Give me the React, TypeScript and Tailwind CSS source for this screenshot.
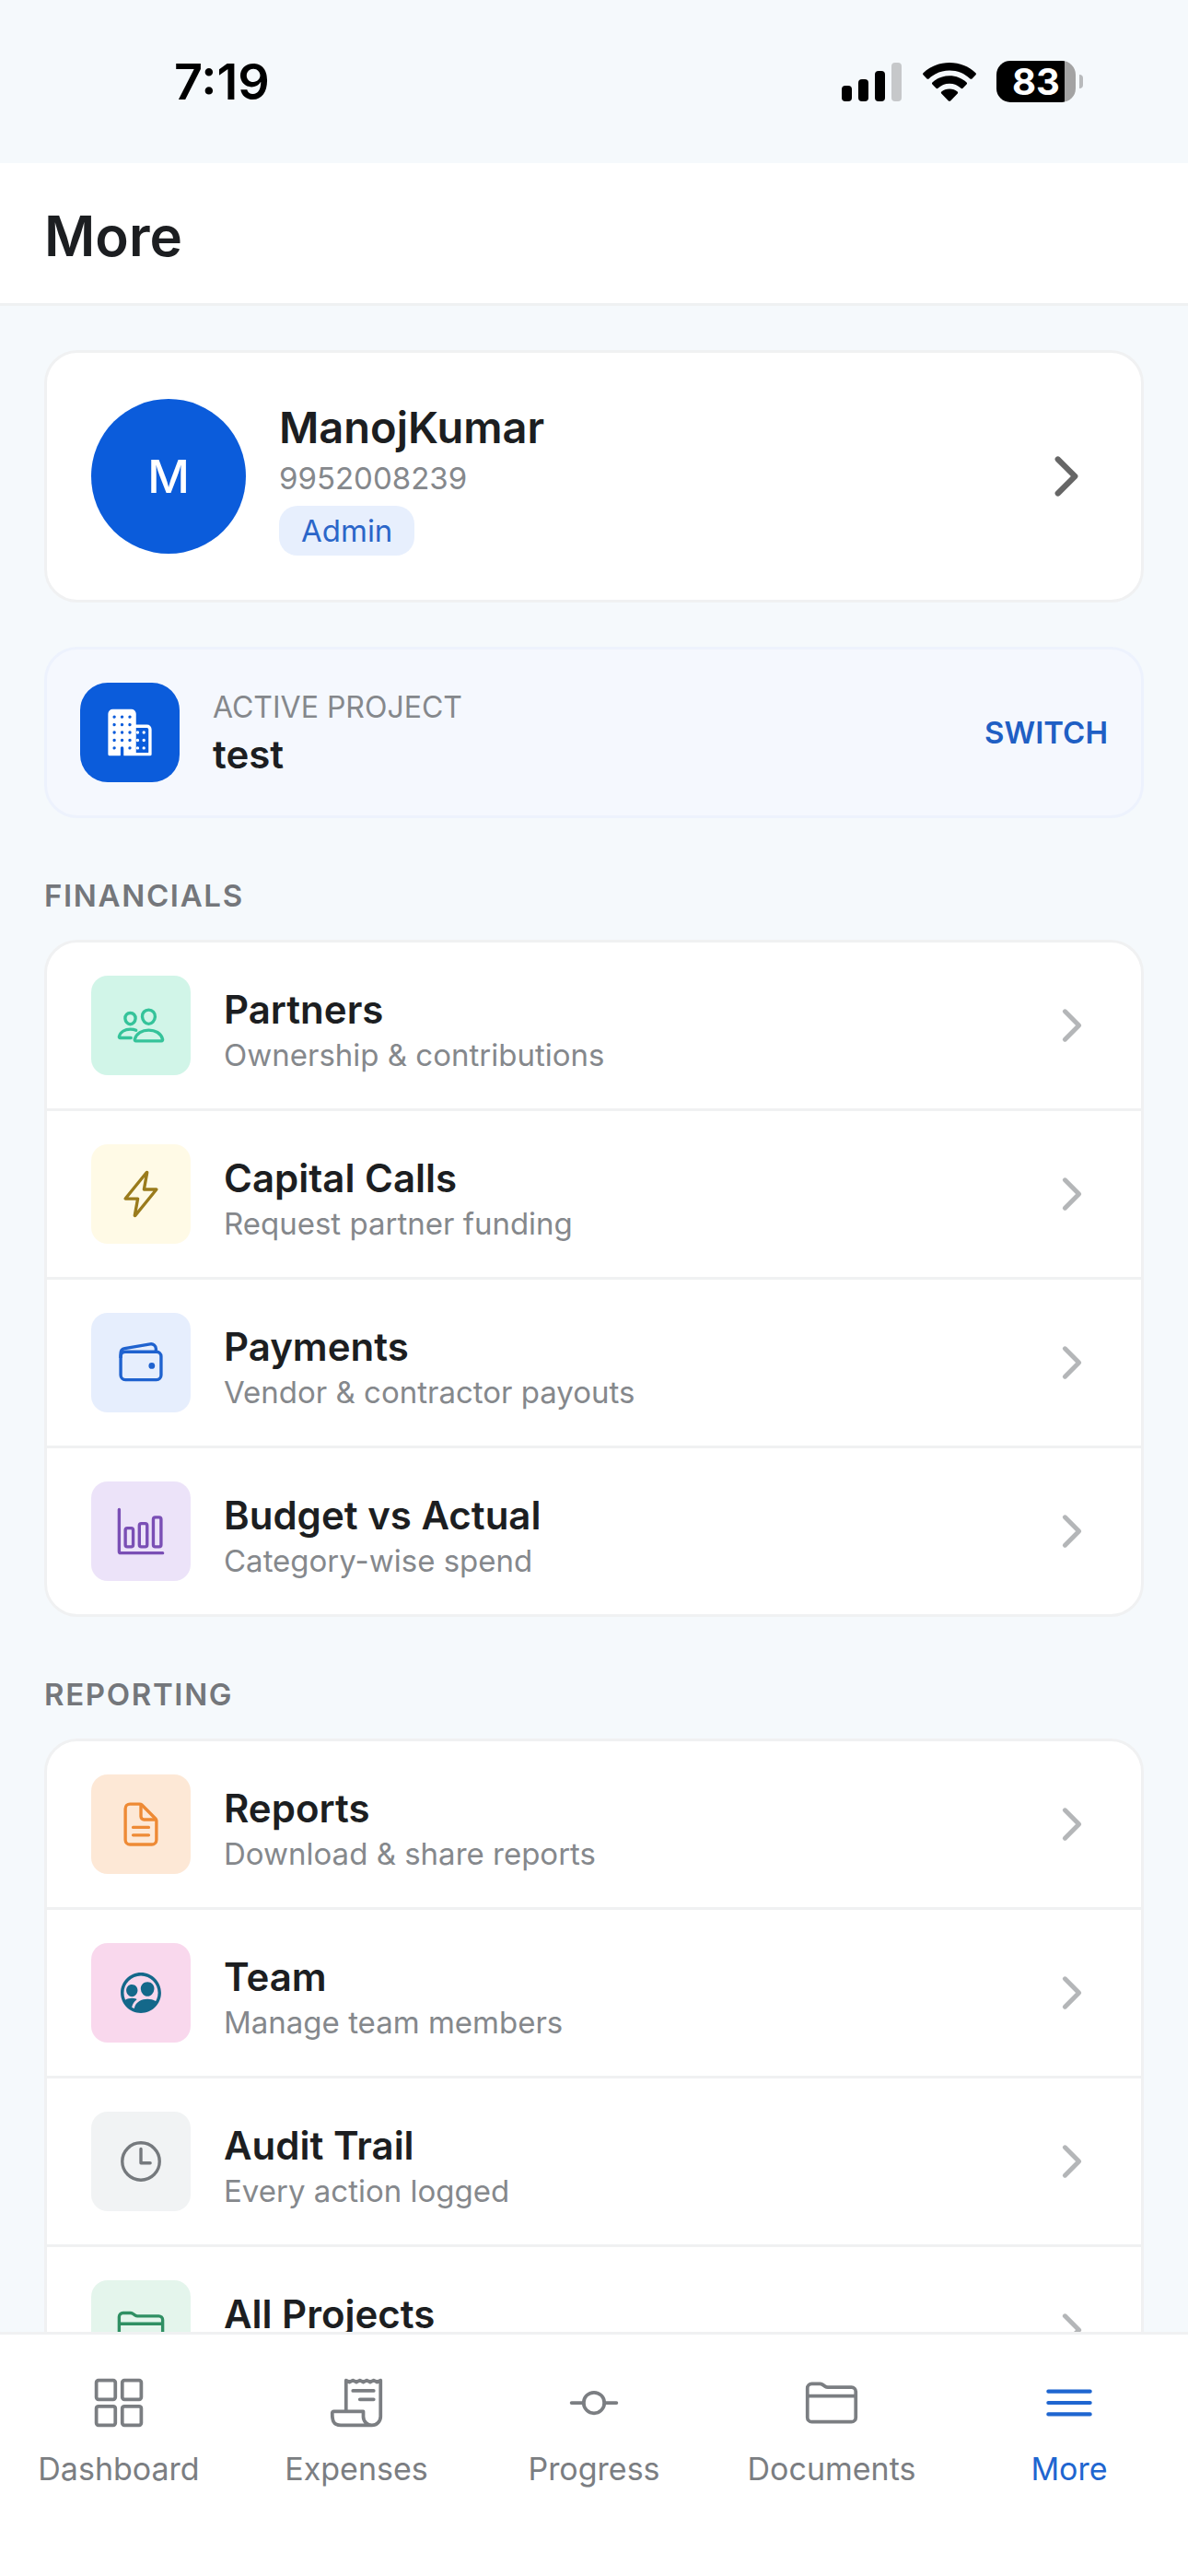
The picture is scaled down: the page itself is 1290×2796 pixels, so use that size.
import type { IconType } from "react-icons";
import {
    IoBarChartOutline,
    IoBusiness,
    IoChevronForward,
    IoDocumentTextOutline,
    IoFlashOutline,
    IoFolderOutline,
    IoGitCommitOutline,
    IoGridOutline,
    IoMenuOutline,
    IoPeopleCircleOutline,
    IoPeopleOutline,
    IoReceiptOutline,
    IoTimeOutline,
    IoWalletOutline,
} from "react-icons/io5";

interface MenuItem {
    title: string;
    subtitle?: string;
    icon: IconType;
    tileClass: string;
}

const FINANCIALS: MenuItem[] = [
    {
        title: "Partners",
        subtitle: "Ownership & contributions",
        icon: IoPeopleOutline,
        tileClass: "bg-[#d1f5e8] text-[#35c39a]",
    },
    {
        title: "Capital Calls",
        subtitle: "Request partner funding",
        icon: IoFlashOutline,
        tileClass: "bg-[#fffae6] text-[#9a7b1c]",
    },
    {
        title: "Payments",
        subtitle: "Vendor & contractor payouts",
        icon: IoWalletOutline,
        tileClass: "bg-[#e6eefd] text-[#1f62cf]",
    },
    {
        title: "Budget vs Actual",
        subtitle: "Category-wise spend",
        icon: IoBarChartOutline,
        tileClass: "bg-[#ece3f9] text-[#7a4fb5]",
    },
];

const REPORTING: MenuItem[] = [
    {
        title: "Reports",
        subtitle: "Download & share reports",
        icon: IoDocumentTextOutline,
        tileClass: "bg-[#fde8d6] text-[#ee8a35]",
    },
    {
        title: "Team",
        subtitle: "Manage team members",
        icon: IoPeopleCircleOutline,
        tileClass: "bg-[#f9d8ed] text-[#14688a]",
    },
    {
        title: "Audit Trail",
        subtitle: "Every action logged",
        icon: IoTimeOutline,
        tileClass: "bg-[#f1f3f4] text-[#75797d]",
    },
    {
        title: "All Projects",
        icon: IoFolderOutline,
        tileClass: "bg-[#e4f5ec] text-[#2f8f63]",
    },
];

const TABS: { label: string; icon: IconType; active?: boolean }[] = [
    { label: "Dashboard", icon: IoGridOutline },
    { label: "Expenses", icon: IoReceiptOutline },
    { label: "Progress", icon: IoGitCommitOutline },
    { label: "Documents", icon: IoFolderOutline },
    { label: "More", icon: IoMenuOutline, active: true },
];

function StatusBar() {
    return (
        <div className="flex h-[177px] shrink-0 items-center justify-between pr-[114px] pl-[189px]">
            <span className="text-[54px] leading-[66px] font-semibold text-black">7:19</span>
            <div className="flex items-center gap-[22px]">
                <svg className="h-[42px] w-[66px]" viewBox="0 0 66 42" aria-label="Signal">
                    <rect x="0" y="25" width="11" height="17" rx="4" />
                    <rect x="18" y="18" width="11" height="24" rx="4" />
                    <rect x="36" y="9" width="11" height="33" rx="4" />
                    <rect x="54" y="0" width="11" height="42" rx="4" fill="#c6c8ca" />
                </svg>
                <svg className="h-[42px] w-[58px]" viewBox="0 0 58 42" aria-label="Wi-Fi">
                    <path d="M29 0C40.200 0 50.300 4.200 57.500 11.200c.6.6.6 1.500 0 2.100l-4 4.100c-.6.600-1.500.6-2.100 0C45.500 11.800 37.600 8.500 29 8.500S12.500 11.800 6.600 17.400c-.6.6-1.500.6-2.100 0l-4-4.100c-.6-.6-.6-1.500 0-2.100C7.700 4.200 17.800 0 29 0Z" />
                    <path d="M29 14.200c7.200 0 13.700 2.700 18.600 7.200.6.6.6 1.500 0 2.100l-4.100 4.200c-.6.600-1.400.6-2 0C38.200 24.600 33.800 22.700 29 22.700s-9.200 1.900-12.500 5c-.6.600-1.400.6-2 0l-4.100-4.200c-.6-.6-.6-1.500 0-2.100C15.300 16.900 21.800 14.200 29 14.200Z" />
                    <path d="M29 28.400c3.400 0 6.400 1.200 8.700 3.200.6.600.6 1.400.1 2l-7.700 7.800c-.6.600-1.600.6-2.200 0l-7.700-7.800c-.5-.6-.5-1.400.1-2 2.300-2 5.300-3.200 8.700-3.200Z" />
                </svg>
                <div className="flex items-center gap-1">
                    <div className="flex h-[45px] w-[86px] items-center justify-center rounded-[15px] bg-linear-to-r from-black from-[86%] to-[#a3a3a3] to-[86%] text-[40px] leading-[48px] font-bold text-white">
                        83
                    </div>
                    <div className="h-[15px] w-1 rounded-r-full bg-[#b8babc]" />
                </div>
            </div>
        </div>
    );
}

function ProfileCard() {
    return (
        <button
            type="button"
            className="flex w-full items-center gap-9 rounded-[36px] border-3 border-[#f0f1f2] bg-white p-12 text-left"
        >
            <span className="flex size-[168px] shrink-0 items-center justify-center rounded-full bg-[#0b5cdb] text-[50px] font-medium text-white">
                M
            </span>
            <span className="flex flex-1 flex-col items-start">
                <span className="text-[47px] leading-[66px] font-semibold text-[#1c1e21]">
                    ManojKumar
                </span>
                <span className="text-[33px] leading-[44px] text-[#85888c]">9952008239</span>
                <span className="mt-2 rounded-[20px] bg-[#e7effd] px-6 text-[33px] leading-[54px] text-[#2b66c9]">
                    Admin
                </span>
            </span>
            <IoChevronForward className="size-[66px] text-[#666]" />
        </button>
    );
}

function ProjectCard() {
    return (
        <div className="mt-12 flex items-center gap-9 rounded-[36px] border-3 border-[#edf2fd] bg-[#f5f8fe] p-9">
            <div className="flex size-[108px] shrink-0 items-center justify-center rounded-[30px] bg-[#0b5cdb]">
                <IoBusiness className="size-[54px] text-white" />
            </div>
            <div className="flex-1">
                <p className="text-[32px] leading-[48px] text-[#85888c]">ACTIVE PROJECT</p>
                <p className="text-[42px] leading-[54px] font-semibold text-[#1c1e21]">test</p>
            </div>
            <button type="button" className="text-[33px] leading-[48px] font-semibold text-[#1f5fc4]">
                SWITCH
            </button>
        </div>
    );
}

function MenuRow({ item }: { item: MenuItem }) {
    const Icon = item.icon;
    return (
        <li>
            <a href="#" className="flex items-center gap-9 px-12 py-9">
                <span
                    className={`flex size-[108px] shrink-0 items-center justify-center rounded-[18px] ${item.tileClass}`}
                >
                    <Icon className="size-[54px]" />
                </span>
                <span className="flex flex-1 flex-col self-start pt-[10px]">
                    <span className="text-[42px] leading-[54px] font-semibold text-[#1c1e21]">
                        {item.title}
                    </span>
                    {item.subtitle && (
                        <span className="text-[33px] leading-[44px] text-[#85888c]">
                            {item.subtitle}
                        </span>
                    )}
                </span>
                <IoChevronForward className="size-[54px] text-[#b4b6b8]" />
            </a>
        </li>
    );
}

function MenuSection({ label, items }: { label: string; items: MenuItem[] }) {
    return (
        <section className="mt-[60px]">
            <h2 className="mb-6 text-[33px] leading-[48px] font-semibold tracking-wider text-[#74777b]">
                {label}
            </h2>
            <ul className="divide-y-3 divide-[#f0f1f2] rounded-[36px] border-3 border-[#f0f1f2] bg-white">
                {items.map((item) => (
                    <MenuRow key={item.title} item={item} />
                ))}
            </ul>
        </section>
    );
}

function TabBar() {
    return (
        <nav className="flex shrink-0 border-t-3 border-[#f0f1f2] bg-white pt-11 pb-[94px]">
            {TABS.map(({ label, icon: Icon, active }) => (
                <a
                    key={label}
                    href="#"
                    aria-current={active ? "page" : undefined}
                    className={`flex flex-1 flex-col items-center gap-5 text-[34px] leading-[44px] ${
                        active ? "text-[#1f66d0]" : "text-[#7b7e82]"
                    }`}
                >
                    <span className="flex h-[60px] items-center">
                        <Icon className={active ? "size-[66px]" : "size-[60px]"} />
                    </span>
                    {label}
                </a>
            ))}
        </nav>
    );
}

export default function App() {
    return (
        <div className="flex h-screen flex-col bg-[#f5f9fc] font-['Inter',sans-serif]">
            <StatusBar />
            <header className="shrink-0 border-b-3 border-[#eff1f2] bg-white px-12 pt-10 pb-[34px]">
                <h1 className="text-[60px] leading-[78px] font-semibold text-[#1c1e21]">More</h1>
            </header>
            <main className="min-h-0 flex-1 overflow-y-auto px-12 py-12 [scrollbar-width:none]">
                <ProfileCard />
                <ProjectCard />
                <MenuSection label="FINANCIALS" items={FINANCIALS} />
                <MenuSection label="REPORTING" items={REPORTING} />
            </main>
            <TabBar />
        </div>
    );
}
